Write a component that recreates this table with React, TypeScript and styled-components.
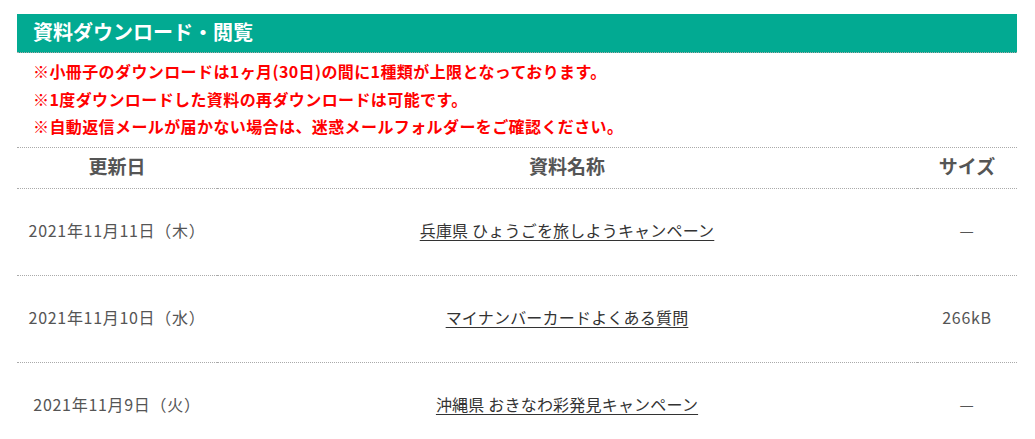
import React from "react";
import styled, { createGlobalStyle } from "styled-components";

const GlobalStyle = createGlobalStyle`
  html, body { margin: 0; padding: 0; background: #fff; }
  body { font-family: "Noto Sans CJK JP", "Noto Sans", sans-serif; }
`;

const Page = styled.div`
  padding: 14px 0 0 17px;
`;

const Section = styled.section`
  width: 1000px;
`;

const TitleBar = styled.h2`
  margin: 0;
  height: 36px;
  padding: 0 0 2px 16px;
  background: #02aa92;
  color: #fff;
  font-size: 20px;
  font-weight: 700;
  line-height: 36px;
  border-bottom: 1px dotted #aaa;
`;

const Notes = styled.div`
  padding: 5px 0 6px 16px;
`;

const Note = styled.p`
  margin: 0;
  color: #ff0000;
  font-size: 16px;
  font-weight: 700;
  line-height: 27.5px;
  letter-spacing: 0.4px;
`;

const Table = styled.div`
  display: grid;
  grid-template-columns: 200px 700px 100px;
  border-top: 1px dotted #aaa;
`;

const HeadCell = styled.div`
  height: 41px;
  display: flex;
  align-items: center;
  justify-content: center;
  padding-bottom: 5px;
  box-sizing: border-box;
  font-size: 19px;
  font-weight: 700;
  color: #555;
  border-bottom: 1px dotted #aaa;
`;

const Cell = styled.div<{ $spaced?: boolean }>`
  height: 87px;
  display: flex;
  align-items: center;
  justify-content: center;
  padding-bottom: 4px;
  box-sizing: border-box;
  font-size: 16px;
  color: #555;
  letter-spacing: ${(p) => (p.$spaced ? "0.7px" : "0")};
  border-bottom: 1px dotted #aaa;
`;

const DocLink = styled.a`
  color: #333;
  text-decoration: underline;
  text-underline-offset: 3px;
  letter-spacing: 0.2px;
  cursor: pointer;
`;

const rows = [
  { date: "2021年11月11日（木）", name: "兵庫県 ひょうごを旅しようキャンペーン", size: "—" },
  { date: "2021年11月10日（水）", name: "マイナンバーカードよくある質問", size: "266kB" },
  { date: "2021年11月9日（火）", name: "沖縄県 おきなわ彩発見キャンペーン", size: "—" },
];

export default function App() {
  return (
    <>
      <GlobalStyle />
      <Page>
        <Section>
          <TitleBar>資料ダウンロード・閲覧</TitleBar>
          <Notes>
            <Note>※小冊子のダウンロードは1ヶ月(30日)の間に1種類が上限となっております。</Note>
            <Note>※1度ダウンロードした資料の再ダウンロードは可能です。</Note>
            <Note>※自動返信メールが届かない場合は、迷惑メールフォルダーをご確認ください。</Note>
          </Notes>
          <Table>
            <HeadCell>更新日</HeadCell>
            <HeadCell>資料名称</HeadCell>
            <HeadCell>サイズ</HeadCell>
            {rows.map((r) => (
              <React.Fragment key={r.date}>
                <Cell $spaced>{r.date}</Cell>
                <Cell>
                  <DocLink>{r.name}</DocLink>
                </Cell>
                <Cell $spaced>{r.size}</Cell>
              </React.Fragment>
            ))}
          </Table>
        </Section>
      </Page>
    </>
  );
}
